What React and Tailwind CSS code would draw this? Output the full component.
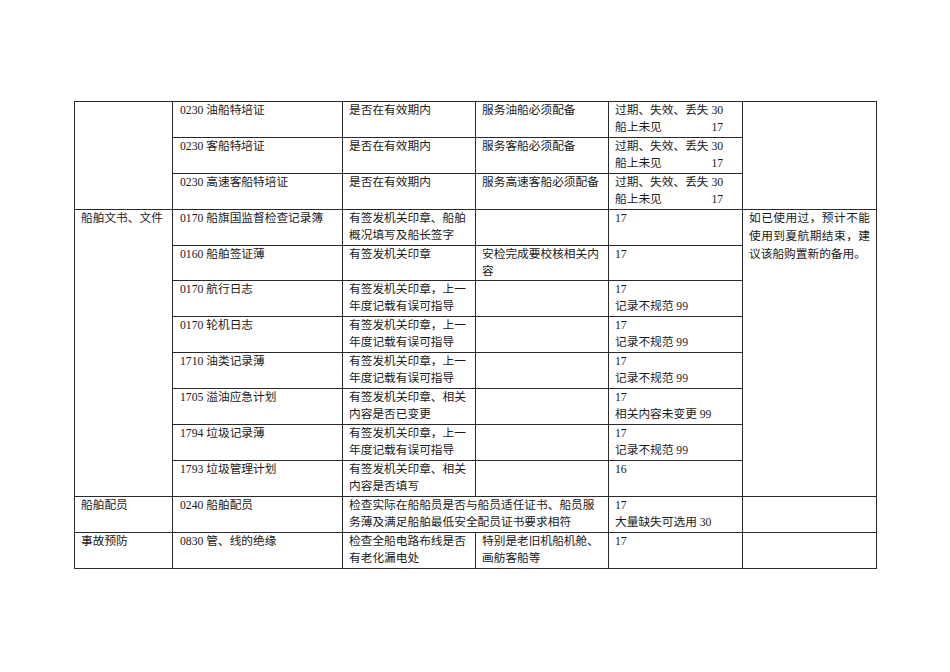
import React from 'react'

const td = 'border border-[#2a2a2a] align-top px-[6px] py-0'
const row = 'h-[35.9px]'

function TwoLine({ a, b }) {
  return (
    <div>
      <div>{a}</div>
      <div>{b}</div>
    </div>
  )
}

function Expired() {
  return (
    <div className="inline-flex flex-col">
      <div>过期、失效、丢失 30</div>
      <div className="flex justify-between">
        <span>船上未见</span>
        <span>17</span>
      </div>
    </div>
  )
}

const certRows = [
  ['0230 油船特培证', '服务油船必须配备'],
  ['0230 客船特培证', '服务客船必须配备'],
  ['0230 高速客船特培证', '服务高速客船必须配备'],
]

const docRows = [
  ['0170 船旗国监督检查记录簿', '有签发机关印章、船舶概况填写及船长签字', '', ['17']],
  ['0160 船舶签证薄', '有签发机关印章', '安检完成要校核相关内容', ['17']],
  ['0170 航行日志', '有签发机关印章，上一年度记载有误可指导', '', ['17', '记录不规范 99']],
  ['0170 轮机日志', '有签发机关印章，上一年度记载有误可指导', '', ['17', '记录不规范 99']],
  ['1710 油类记录薄', '有签发机关印章，上一年度记载有误可指导', '', ['17', '记录不规范 99']],
  ['1705 溢油应急计划', '有签发机关印章、相关内容是否已变更', '', ['17', '相关内容未变更 99']],
  ['1794 垃圾记录薄', '有签发机关印章，上一年度记载有误可指导', '', ['17', '记录不规范 99']],
  ['1793 垃圾管理计划', '有签发机关印章、相关内容是否填写', '', ['16']],
]

export default function App() {
  return (
    <div
      className="min-h-screen bg-white pt-[101px] pl-[74px] text-[#1a1a1a] text-[11.7px] leading-[17px]"
      style={{ fontFamily: '"Liberation Serif", "Noto Sans CJK SC", serif' }}
    >
      <table className="table-fixed border-collapse w-[802px]">
        <colgroup>
          <col className="w-[98px]" />
          <col className="w-[170px]" />
          <col className="w-[133px]" />
          <col className="w-[133px]" />
          <col className="w-[134px]" />
          <col className="w-[134px]" />
        </colgroup>
        <tbody>
          {certRows.map(([name, note], i) => (
            <tr key={name} className={row}>
              {i === 0 && <td rowSpan={3} className={td}></td>}
              <td className={td + ' pl-[7px]'}>{name}</td>
              <td className={td}>是否在有效期内</td>
              <td className={td}>{note}</td>
              <td className={td}>
                <Expired />
              </td>
              {i === 0 && <td rowSpan={3} className={td}></td>}
            </tr>
          ))}

          {docRows.map(([name, check, note, score], i) => (
            <tr key={name} className={row}>
              {i === 0 && (
                <td rowSpan={8} className={td}>
                  船舶文书、文件
                </td>
              )}
              <td className={td + ' pl-[7px]'}>{name}</td>
              <td className={td}>{check}</td>
              <td className={td}>{note}</td>
              <td className={td}>
                {score.map((s) => (
                  <div key={s}>{s}</div>
                ))}
              </td>
              {i === 0 && (
                <td rowSpan={8} className={td + ' leading-[18px]'}>
                  <div className="[text-align-last:justify]">如已使用过，预计不能</div>
                  <div className="[text-align-last:justify]">使用到夏航期结束，建</div>
                  <div>议该船购置新的备用。</div>
                </td>
              )}
            </tr>
          ))}

          <tr className={row}>
            <td className={td}>船舶配员</td>
            <td className={td + ' pl-[7px]'}>0240 船舶配员</td>
            <td colSpan={2} className={td}>
              检查实际在船船员是否与船员适任证书、船员服务薄及满足船舶最低安全配员证书要求相符
            </td>
            <td className={td}>
              <TwoLine a="17" b="大量缺失可选用 30" />
            </td>
            <td className={td}></td>
          </tr>

          <tr className={row}>
            <td className={td}>事故预防</td>
            <td className={td + ' pl-[7px]'}>0830 管、线的绝缘</td>
            <td className={td}>检查全船电路布线是否有老化漏电处</td>
            <td className={td}>特别是老旧机船机舱、画舫客船等</td>
            <td className={td}>17</td>
            <td className={td}></td>
          </tr>
        </tbody>
      </table>
    </div>
  )
}
